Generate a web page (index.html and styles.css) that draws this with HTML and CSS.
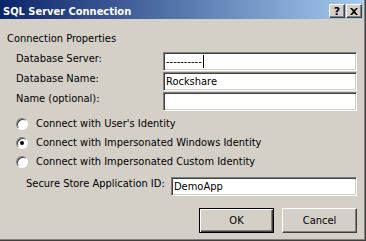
FILE: index.html
```html
<!DOCTYPE html>
<html lang="en">
<head>
  <meta charset="UTF-8">
  <title>SQL Server Connection</title>
  <link rel="stylesheet" href="styles.css">
</head>
<body>

<div class="frame">
  <div class="window">
    <div class="titlebar">
      <span class="title">SQL Server Connection</span>
      <div class="title-buttons">
        <button class="cap-btn">?</button>
        <button class="cap-btn">
          <svg width="8" height="7" viewBox="0 0 8 7"><path d="M0 0h2l2 2 2-2h2L5 3.5 8 7H6L4 5 2 7H0l3-3.5z" fill="#000"/></svg>
        </button>
      </div>
    </div>

    <div class="content">
      <div class="group-title">Connection Properties</div>

      <div class="fields">
        <label>Database Server:</label>
        <div class="textbox"><span class="dashes">----------</span><span class="caret"></span></div>
        <label>Database Name:</label>
        <div class="textbox">Rockshare</div>
        <label>Name (optional):</label>
        <div class="textbox"></div>
      </div>

      <div class="options">
        <div class="option"><span class="radio"></span>Connect with User's Identity</div>
        <div class="option"><span class="radio checked"></span>Connect with Impersonated Windows Identity</div>
        <div class="option"><span class="radio"></span>Connect with Impersonated Custom Identity</div>
      </div>

      <div class="app-id">
        <label>Secure Store Application ID:</label>
        <div class="textbox wide">DemoApp</div>
      </div>

      <div class="actions">
        <button class="btn default">OK</button>
        <button class="btn">Cancel</button>
      </div>
    </div>
  </div>
</div>

</body>
</html>
```

FILE: styles.css
```css
body {
  margin: 0;
  padding: 0;
  background-color: #d4d0c8;
  font-family: "DejaVu Sans Condensed", "DejaVu Sans", sans-serif;
  font-size: 11px;
  line-height: 13px;
  color: #000;
}
.frame {
  width: 366px;
  height: 241px;
  box-sizing: border-box;
  border-right: 1px solid #404040;
  border-bottom: 1px solid #404040;
}
.window {
  height: 100%;
  box-sizing: border-box;
  border-right: 1px solid #808080;
  border-bottom: 1px solid #808080;
  padding-right: 1px;
}
.titlebar {
  height: 19px;
  display: flex;
  align-items: flex-start;
  justify-content: space-between;
  padding: 0 1px 0 3px;
  background: linear-gradient(to right, #0a246a, #a6caf0);
}
.title {
  color: white;
  font-weight: bold;
  padding-top: 5px;
}
.title-buttons {
  display: flex;
  gap: 1px;
  margin-top: 4px;
}
.cap-btn {
  width: 16px;
  height: 14px;
  padding: 0;
  margin: 0;
  display: flex;
  align-items: center;
  justify-content: center;
  background-color: #d4d0c8;
  border: 1px solid;
  border-color: #fff #404040 #404040 #fff;
  box-shadow: inset -1px -1px #808080;
  font-family: "DejaVu Sans", sans-serif;
  font-weight: bold;
  font-size: 11px;
  color: #000;
}
.content {
  padding: 13px 6px 0 7px;
}
.group-title {
  margin-bottom: 7px;
}
.fields {
  display: grid;
  grid-template-columns: 147px 194px;
  grid-auto-rows: 19px;
  row-gap: 1px;
  padding-left: 9px;
  align-items: start;
}
.textbox {
  height: 19px;
  box-sizing: border-box;
  background-color: white;
  border: 1px solid;
  border-color: #808080 #fff #fff #808080;
  box-shadow: inset 1px 1px #404040, inset -1px -1px #d4d0c8;
  padding: 0 2px;
  display: flex;
  align-items: center;
  white-space: nowrap;
}
.caret {
  display: inline-block;
  width: 1px;
  height: 13px;
  background-color: #000;
  margin-left: 1px;
}
.options {
  display: flex;
  flex-direction: column;
  gap: 6px;
  padding: 6px 0 0 9px;
}
.option {
  display: flex;
  align-items: center;
}
.radio {
  width: 12px;
  height: 12px;
  box-sizing: border-box;
  border-radius: 50%;
  background-color: white;
  border: 1px solid;
  border-color: #808080 #fff #fff #808080;
  box-shadow: inset 1px 1px #404040;
  margin-right: 8px;
  display: flex;
  align-items: center;
  justify-content: center;
}
.radio.checked::after {
  content: "";
  width: 4px;
  height: 4px;
  border-radius: 50%;
  background-color: #000;
}
.app-id {
  display: flex;
  align-items: flex-start;
  padding: 9px 0 0 19px;
}
.app-id label {
  width: 145px;
}
.textbox.wide {
  width: 186px;
}
.actions {
  display: flex;
  justify-content: flex-end;
  gap: 8px;
  padding-top: 12px;
}
.btn {
  width: 75px;
  height: 25px;
  margin: 0;
  padding: 0;
  background-color: #d4d0c8;
  border: 1px solid;
  border-color: #fff #404040 #404040 #fff;
  box-shadow: inset -1px -1px #808080;
  font-family: inherit;
  font-size: 11px;
  color: #000;
}
.btn.default {
  border: 1px solid #000;
  box-shadow: inset 1px 1px #fff, inset -1px -1px #404040, inset -2px -2px #808080;
}
```
